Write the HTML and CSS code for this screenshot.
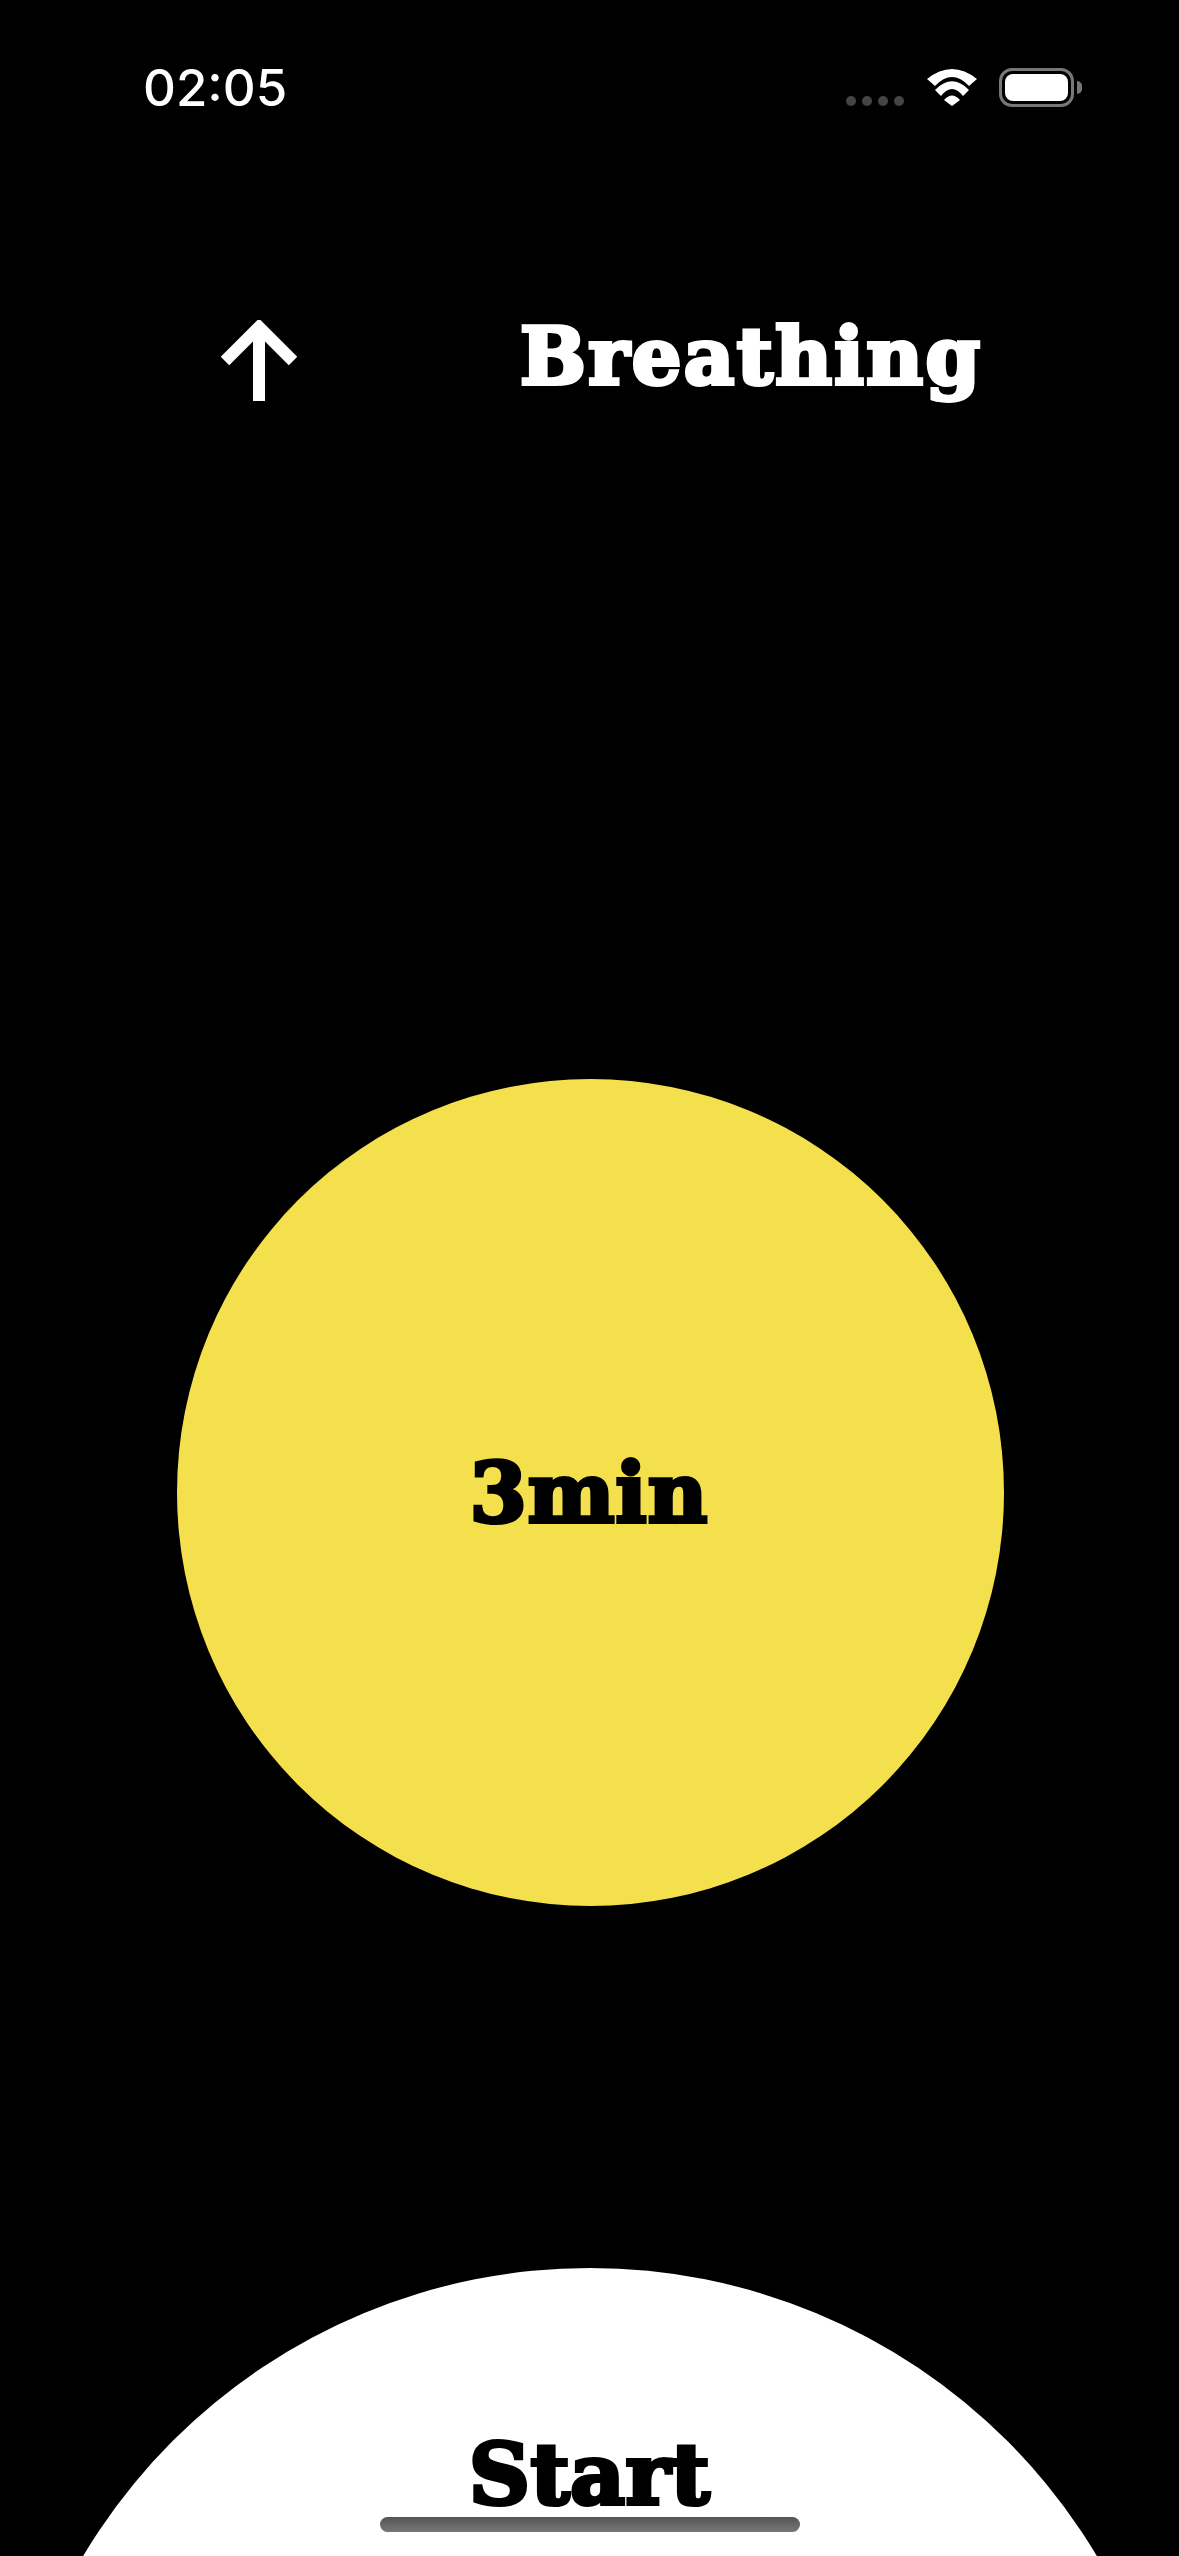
FILE: index.html
```html
<!DOCTYPE html>
<html lang="en">
<head>
  <meta charset="UTF-8" />
  <meta name="viewport" content="width=device-width, initial-scale=1.0"/>
  <title>Breathing</title>
  <link rel="stylesheet" href="styles.css">
</head>
<body>
  <div class="screen">
    <div class="status-bar">
      <span class="time">02:05</span>
      <div class="status-icons">
        <div class="signal">
          <span class="dot"></span><span class="dot"></span><span class="dot"></span><span class="dot"></span>
        </div>
        <svg class="wifi" width="50" height="37" viewBox="0 0 50 37">
          <path d="M0 10 Q25 -10 50 10 L42 17 Q25 -1 8 17 Z" fill="#fff"/>
          <path d="M8 21 Q25 3.600 42 21 L36 27 Q25 13 14 27 Z" fill="#fff"/>
          <path d="M17 31 Q25 22 33 31 L25 37 Z" fill="#fff"/>
        </svg>
        <div class="battery"><div class="battery-fill"></div></div>
      </div>
    </div>

    <div class="header">
      <svg class="back" width="76" height="82" viewBox="0 0 76 82">
        <path d="M4 41 L38 7 L72 41" fill="none" stroke="#fff" stroke-width="12"/>
        <path d="M38 6 V81" fill="none" stroke="#fff" stroke-width="12"/>
      </svg>
      <h1 class="title">Breathing</h1>
    </div>

    <div class="timer">
      <span class="timer-text">3min</span>
    </div>

    <div class="start">
      <span class="start-text">Start</span>
    </div>

    <div class="home-bar"></div>
  </div>
</body>
</html>
```

FILE: styles.css
```css
body {
  margin: 0;
  background: #000;
}
.screen {
  position: relative;
  width: 1179px;
  height: 2556px;
  overflow: hidden;
  background: #000;
  display: flex;
  flex-direction: column;
  align-items: center;
}
.status-bar {
  width: 100%;
  box-sizing: border-box;
  height: 68px;
  margin-top: 62px;
  padding: 0 105px 0 143px;
  display: flex;
  justify-content: space-between;
  align-items: flex-start;
  flex-shrink: 0;
}
.time {
  font-family: Inter, sans-serif;
  font-weight: 500;
  font-size: 51px;
  line-height: 52px;
  color: #fff;
}
.status-icons {
  display: flex;
  align-items: flex-start;
  margin-top: 6px;
}
.signal {
  display: flex;
  gap: 6px;
  margin-top: 28px;
  margin-right: 23px;
}
.dot {
  width: 10px;
  height: 10px;
  border-radius: 5px;
  background: #444;
}
.wifi {
  margin-top: 1px;
  margin-right: 22px;
}
.battery {
  position: relative;
  width: 75px;
  height: 39px;
  box-sizing: border-box;
  border: 3px solid #777;
  border-radius: 13px;
  padding: 3px;
}
.battery::after {
  content: "";
  position: absolute;
  right: -11px;
  top: 10px;
  width: 5px;
  height: 13px;
  background: #777;
  border-radius: 0 6px 6px 0;
}
.battery-fill {
  height: 100%;
  background: #fff;
  border-radius: 8px;
}
.header {
  width: 100%;
  box-sizing: border-box;
  height: 90px;
  margin-top: 185px;
  padding-left: 221px;
  display: flex;
  align-items: flex-start;
  flex-shrink: 0;
}
.back {
  display: block;
  margin-top: 5px;
}
.title {
  margin: -3px 0 0 223px;
  font-family: "DejaVu Serif", serif;
  font-weight: 700;
  font-size: 78px;
  line-height: 90px;
  color: #fff;
  -webkit-text-stroke: 4px #fff;
  letter-spacing: 2.4px;
}
.timer {
  width: 827px;
  height: 827px;
  margin-top: 674px;
  margin-right: -1px;
  border-radius: 50%;
  background: #f4e04d;
  display: flex;
  justify-content: center;
  align-items: center;
  flex-shrink: 0;
}
.timer-text {
  margin-right: 2px;
  font-family: "DejaVu Serif", serif;
  font-weight: 700;
  font-size: 82px;
  letter-spacing: 1px;
  color: #000;
  -webkit-text-stroke: 4px #000;
}
.start {
  width: 1180px;
  height: 1180px;
  margin-top: 362px;
  border-radius: 50%;
  background: #fff;
  display: flex;
  justify-content: center;
  flex-shrink: 0;
}
.start-text {
  margin-top: 156px;
  font-family: "DejaVu Serif", serif;
  font-weight: 700;
  font-size: 85px;
  line-height: 100px;
  letter-spacing: 0.3px;
  color: #000;
  -webkit-text-stroke: 4px #000;
}
.home-bar {
  position: absolute;
  left: 380px;
  top: 2517px;
  width: 420px;
  height: 15px;
  border-radius: 8px;
  background: linear-gradient(#555, #777);
}
```
